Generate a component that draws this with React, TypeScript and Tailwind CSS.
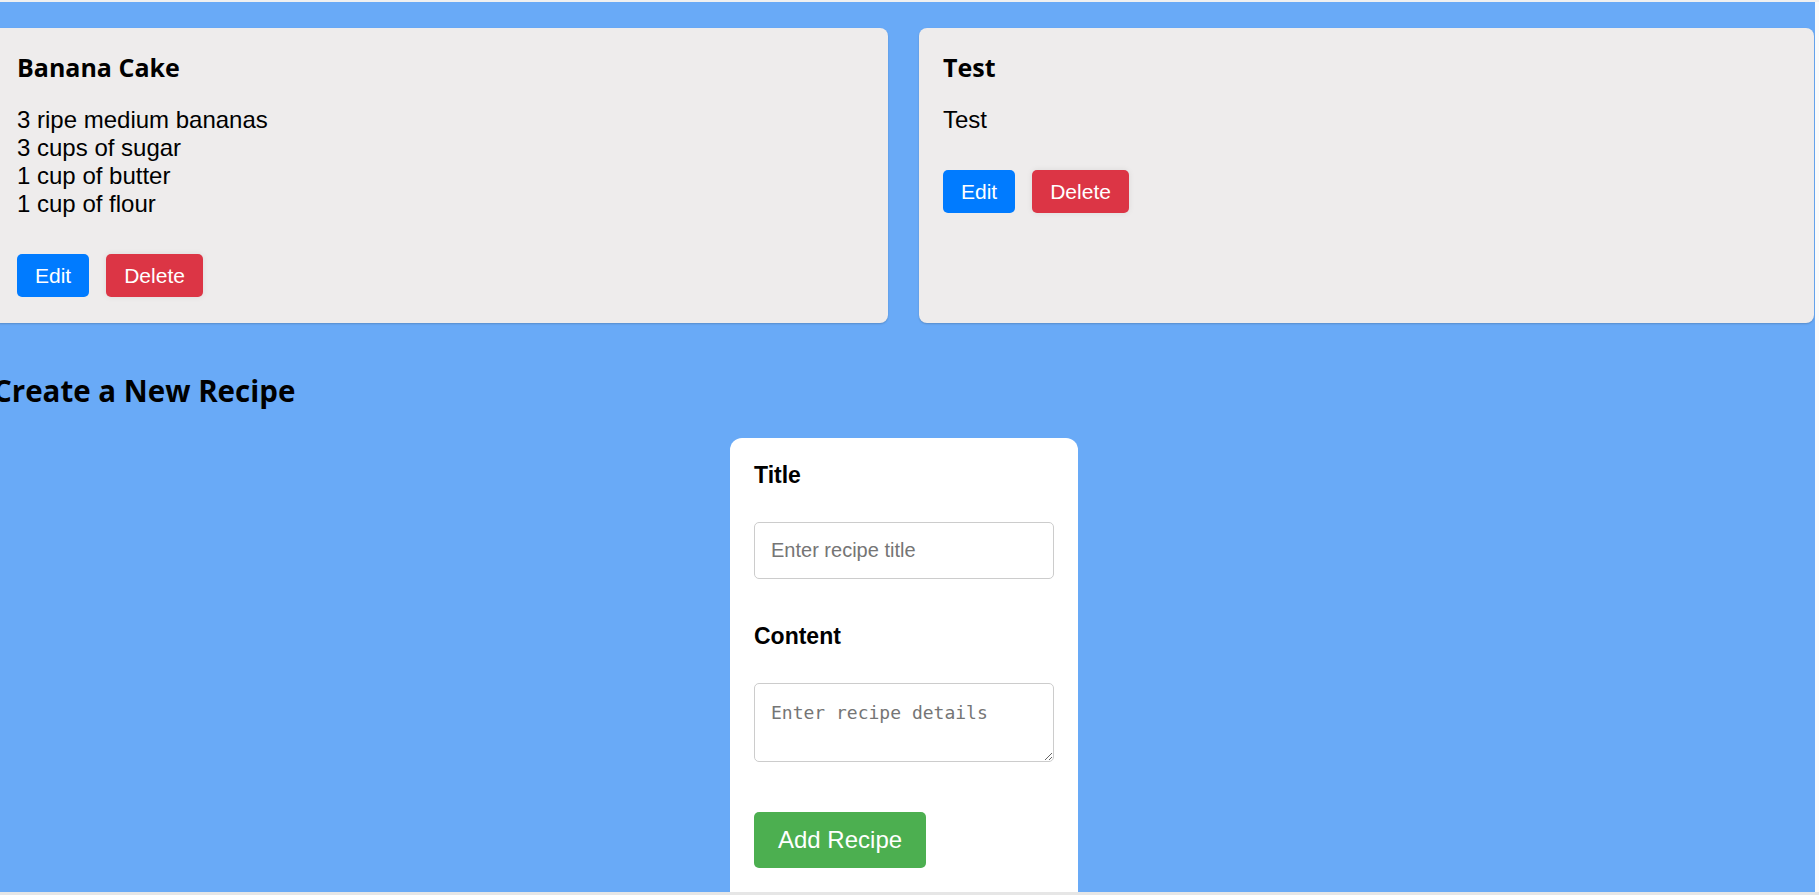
import React from "react";

const arial = "font-['Liberation_Sans',Arial,sans-serif]";
const head = "font-['Open_Sans',sans-serif]";

function RecipeCard({ title, lines }: { title: string; lines: string[] }) {
  return (
    <div className="w-[895px] h-[295px] shrink-0 rounded-[8px] bg-[#eeecec] p-[24px] shadow-[0_1px_2px_rgba(0,0,0,0.18)]">
      <h3 className={`${head} text-[25px] leading-[30px] font-bold text-black`}>{title}</h3>
      <div className={`${arial} mt-[24px] text-[24px] leading-[28px] text-black`}>
        {lines.map((l, i) => (
          <div key={i}>{l}</div>
        ))}
      </div>
      <div className="mt-[36px] flex gap-[17px]">
        <button className={`${arial} h-[43px] rounded-[5px] bg-[#007bff] px-[18px] text-[21px] text-white`}>
          Edit
        </button>
        <button className={`${arial} h-[43px] rounded-[5px] bg-[#dc3545] px-[18px] text-[21px] text-white shadow-[0_0_6px_rgba(0,0,0,0.08)]`}>
          Delete
        </button>
      </div>
    </div>
  );
}

export default function App() {
  return (
    <div className="flex h-[895px] w-[1819px] flex-col overflow-hidden bg-[#f7f7f7]">
      <div className="h-[2px] shrink-0 bg-[#f0f0f0]" />
      <div className="flex min-h-0 flex-1">
        <div className="h-full w-[1815px] shrink-0 overflow-hidden bg-[#69aaf7]">
          <div className="ml-[-7px] w-[1822px] pt-[26px]">
            <div className="flex gap-[31px]">
              <RecipeCard
                title="Banana Cake"
                lines={["3 ripe medium bananas", "3 cups of sugar", "1 cup of butter", "1 cup of flour"]}
              />
              <RecipeCard title="Test" lines={["Test"]} />
            </div>
            <h2 className={`${head} mt-[50px] text-[29.5px] leading-[36px] font-bold text-black`}>
              Create a New Recipe
            </h2>
            <form className="mx-auto mt-[29px] w-[348px] rounded-[12px] bg-white p-[24px] pb-[40px]">
              <label className={`${arial} block text-[23px] leading-[26px] font-bold text-black`}>Title</label>
              <input
                placeholder="Enter recipe title"
                className={`${arial} mt-[34px] block h-[57px] w-[300px] rounded-[5px] border border-[#cccccc] px-[16px] text-[20px] text-black placeholder:text-[#757575] outline-none`}
              />
              <label className={`${arial} mt-[44px] block text-[23px] leading-[26px] font-bold text-black`}>
                Content
              </label>
              <textarea
                placeholder="Enter recipe details"
                className="mt-[34px] block h-[79px] w-[300px] rounded-[5px] border border-[#cccccc] px-[16px] pt-[18px] pb-[8px] font-['DejaVu_Sans_Mono',monospace] text-[18px] leading-[22px] text-black placeholder:text-[#757575] outline-none"
              />
              <button
                type="button"
                className={`${arial} mt-[50px] h-[56px] rounded-[5px] bg-[#4caf50] px-[24px] text-[24px] text-white`}
              >
                Add Recipe
              </button>
            </form>
          </div>
        </div>
        <div className="flex-1 bg-[#fafafa]" />
      </div>
      <div className="h-[3px] shrink-0 bg-[#e6e6e6]" />
    </div>
  );
}
